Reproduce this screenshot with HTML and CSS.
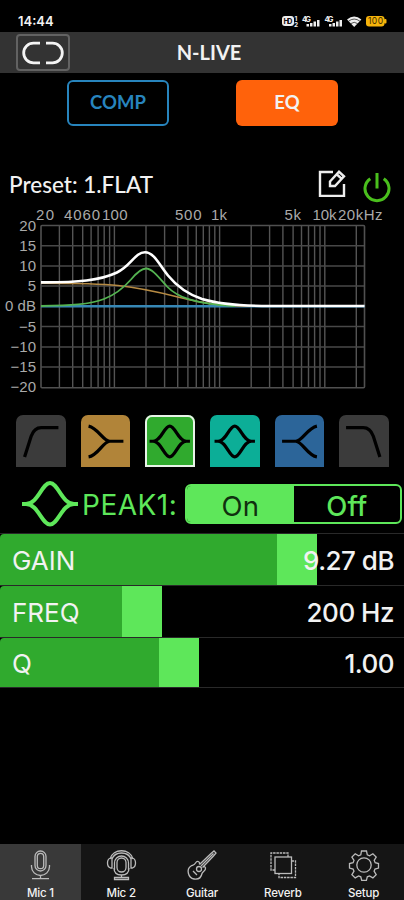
FILE: index.html
```html
<!DOCTYPE html>
<html lang="en">
<head>
  <meta charset="UTF-8">
  <meta name="viewport" content="width=device-width, initial-scale=1.0">
  <title>N-LIVE</title>
  <link rel="stylesheet" href="styles.css">
</head>
<body>
  <div class="statusbar">
    <span class="clock">14:44</span>
    <svg class="status-icons" width="108" height="16" viewBox="0 0 108 16">
      <rect x="1" y="3" width="12" height="10" rx="3" fill="#eee"/>
      <text x="2.5" y="11" font-size="7.5" font-weight="700" fill="#111" textLength="9">HD</text>
      <text x="13.5" y="7.5" font-size="6.5" font-weight="700">1</text>
      <text x="13" y="14" font-size="6.5" font-weight="700">2</text>
      <text x="21" y="8.5" font-size="7.5" font-weight="700" textLength="9">4G</text>
      <path d="M25.500 13.500v-2.500h2.500v2.500zM29 13.500v-3.500h2.500v3.500zM32.500 13.500v-5h2.500v5zM36 13.500v-6.500h2.500v6.500z"/>
      <text x="43.500" y="8.500" font-size="7.500" font-weight="700" textLength="9">4G</text>
      <path d="M48 13.500v-2.500h2.500v2.500zM51.500 13.500v-3.500h2.500v3.500zM55 13.500v-5h2.500v5zM58.500 13.500v-6.500h2.500v6.500z"/>
      <path d="M66 6.500q7.200-6 14.400 0l-7.200 7.500z"/>
      <path d="M67.500 8.200q5.700-4.300 11.400 0M69.800 10.600q3.400-2.600 6.800 0" fill="none" stroke="#111" stroke-width=".7"/>
      <rect x="85" y="3" width="18.500" height="10.500" rx="3" fill="#f6b40b"/>
      <rect x="103" y="6" width="2.500" height="4.500" rx="1" fill="#f6b40b"/>
      <text x="87" y="11.300" font-size="8.500" fill="#3c2c00" textLength="15">100</text>
    </svg>
  </div>

  <header class="header">
    <button class="link-button">
      <svg width="44" height="26" viewBox="0 0 44 26">
        <path d="M19 3.200h-6.500a9.800 9.800 0 0 0 0 19.600h6.500M25 3.200h6.500a9.800 9.800 0 0 1 0 19.600h-6.500"/>
      </svg>
    </button>
    <h1>N-LIVE</h1>
  </header>

  <div class="modes">
    <button class="mode comp">COMP</button>
    <button class="mode eq">EQ</button>
  </div>

  <div class="preset">
    <span class="preset-name">Preset: 1.FLAT</span>
    <svg class="edit" width="28" height="28" viewBox="0 0 28 28">
      <path d="M15 3H2v24h24V15M12 12.500l9-9.700 5 4.600-9 9.600h-5zM19 5.500l4.500 4.200"/>
    </svg>
    <svg class="power" width="28" height="32" viewBox="0 0 28 32">
      <path d="M7.300 7.700a12 12 0 1 0 13.400 0M14 2v15.500"/>
    </svg>
  </div>

  <svg class="graph" width="404" height="194" viewBox="0 205 404 194">
    <path class="vline" d="M59.400 225v163M72.700 225v163M82.700 225v163M91.100 225v163M98.100 225v163M104.200 225v163M109.600 225v163M114.400 225v163M146 225v163M164.600 225v163M177.700 225v163M187.900 225v163M196.300 225v163M203.300 225v163M209.400 225v163M214.800 225v163M219.600 225v163M251.200 225v163M269.600 225v163M282.900 225v163M293.100 225v163M301.500 225v163M308.500 225v163M314.600 225v163M320 225v163M324.800 225v163M356.300 225v163"/>
    <path class="hline" d="M41 245.700h324M41 266h324M41 286h324M41 326.500h324M41 347h324M41 367h324"/>
    <rect class="frame" x="41" y="225.500" width="323.500" height="162.200" rx="1"/>
    <path class="zero" d="M41 306.200H364.500"/>
    <path class="low" d="M41 283.200C74 283.200 100 283.600 118 285.500C145 288.500 162 293 180 297.500C200 302.500 218 306 251 306"/>
    <path class="peak" d="M41 306C70 305.500 90 304.500 104 299C117 294 124 287.500 131 279.500C136 273.500 141 268.500 146 268.500C152 268.500 158 276.500 167 286.500C177 297 194 304 235 306"/>
    <path class="sum" d="M41 282.400C78 282.600 100 280.500 117 272.500C131 266 135 252.300 145 252.300C154 252.300 159 264.500 168 275.500C177 286.500 187 294 202 299C219 304 240 306 270 306H364.500"/>
    <g class="freq-labels">
      <text x="36" y="220" textLength="18">20</text>
      <text x="64" y="220" textLength="17.500">40</text>
      <text x="82.500" y="220" textLength="17.500">60</text>
      <text x="102" y="220" textLength="25.500">100</text>
      <text x="175" y="220" textLength="26.500">500</text>
      <text x="211" y="220" textLength="16">1k</text>
      <text x="284.500" y="220" textLength="16.500">5k</text>
      <text x="312.500" y="220" textLength="24">10k</text>
      <text x="338" y="220" textLength="44.500">20kHz</text>
    </g>
    <g class="db-labels">
      <text x="36" y="230.500">20</text>
      <text x="36" y="250.500">15</text>
      <text x="36" y="270.800">10</text>
      <text x="36" y="291">5</text>
      <text x="36" y="311.300" textLength="31">0 dB</text>
      <text x="36" y="331.500">−5</text>
      <text x="36" y="351.800">−10</text>
      <text x="36" y="372">−15</text>
      <text x="36" y="392.300">−20</text>
    </g>
  </svg>

  <div class="filters">
    <button class="filter"><svg viewBox="0 0 49 52"><path d="M8.500 41.500 15 21Q18 12.500 25 12.500H42"/></svg></button>
    <button class="filter shelf-low"><svg viewBox="0 0 49 52"><path d="M7.500 11C17 13 22 26 28.500 26H42M7.500 41.500C17 40 22 26 28.500 26"/></svg></button>
    <button class="filter peak1 selected"><svg viewBox="0 0 49 52"><path d="M4.500 26H8C16 26 19 11 24.500 11S33 26 41 26H44.500M8 26C16 26 19 41.500 24.500 41.500S33 26 41 26"/></svg></button>
    <button class="filter peak2"><svg viewBox="0 0 49 52"><path d="M4.500 26H8C16 26 19 11 24.500 11S33 26 41 26H44.500M8 26C16 26 19 41.500 24.500 41.500S33 26 41 26"/></svg></button>
    <button class="filter shelf-high"><svg viewBox="0 0 49 52"><path d="M41.500 11C32 13 27 26 20.500 26H7M41.500 41.500C32 40 27 26 20.500 26"/></svg></button>
    <button class="filter"><svg viewBox="0 0 49 52"><path d="M7 12.500H24Q31 12.500 34 21L40.500 41.500"/></svg></button>
  </div>

  <div class="band">
    <svg class="band-icon" width="58" height="48" viewBox="0 0 58 48">
      <path d="M1 24H5C17 24 21 3 29 3S41 24 53 24H57M5 24C17 24 21 44.500 29 44.500S41 24 53 24"/>
    </svg>
    <span class="band-name">PEAK1:</span>
    <div class="toggle">
      <button class="on">On</button>
      <button class="off">Off</button>
    </div>
  </div>

  <div class="sliders">
    <div class="slider">
      <div class="fill" style="width: 316.5px"></div>
      <span>GAIN</span><span>9.27 dB</span>
    </div>
    <div class="slider">
      <div class="fill" style="width: 162px"></div>
      <span>FREQ</span><span>200 Hz</span>
    </div>
    <div class="slider">
      <div class="fill" style="width: 199px"></div>
      <span>Q</span><span>1.00</span>
    </div>
  </div>

  <nav class="tabs">
    <a class="tab active">
      <svg viewBox="0 0 32 32"><rect x="11" y="2" width="11" height="20" rx="5.500"/><rect x="13.300" y="4.300" width="6.400" height="15.400" rx="3.200"/><path d="M7.500 16v1.500a9 9 0 0 0 18 0V16M16.500 26.500v3M8 29.700h17"/></svg>
      <span>Mic 1</span>
    </a>
    <a class="tab">
      <svg viewBox="0 0 32 32"><path d="M5 10C8-1 25-1 28 10M7 10C10 2 23 2 26 10M7 9v10H5.500Q2.500 18 2.500 14T5.500 9zM26 9v10h1.500Q30.500 18 30.500 14T27.500 9zM9.500 21V14a7 7 0 0 1 14 0v7M9 19q0 7 7.500 7t7.500-7M16.500 26v3M9.500 28.500h14v2h-14z"/><rect x="12" y="9" width="9" height="14" rx="4.500"/></svg>
      <span>Mic 2</span>
    </a>
    <a class="tab">
      <svg viewBox="0 0 32 32"><path d="M13.500 15.500 25 4.500 28 2l2 2-2.500 3L16.500 18.500M15 17 27.500 4.500M13.500 15.500C14 12 11 11.500 9.500 14C8.500 16 7 16 5 17C0 20 2 29 8 30C14 31 15.500 27 16 24.500C16.500 22.500 20 22 19.500 19C19 17 17.500 17.500 16.500 18.500M7 22l4 4"/><circle cx="13" cy="20" r="2.500"/></svg>
      <span>Guitar</span>
    </a>
    <a class="tab">
      <svg viewBox="0 0 32 32"><rect x="8" y="8" width="16.500" height="16.500"/><path stroke-dasharray="2.500 .8" d="M8 21H4V4H21V8M24.500 12H28.500V28.500H12V24.500"/></svg>
      <span>Reverb</span>
    </a>
    <a class="tab">
      <svg viewBox="0 0 32 32"><circle cx="16" cy="16" r="7.200"/><path d="M13.500 2h5l.8 3.800 2.200 1 3.400-2.100 3.300 3.300-2 3.400 1 2.300 3.300.8v4.600l-3.500.9-.9 2.200 2.100 3.400-3.300 3.300-3.400-2-2.200.9-.9 3.500h-4.700l-.9-3.500-2.200-.9-3.400 2-3.300-3.300 2.100-3.400-.9-2.200-3.600-.9v-4.600l3.600-.8.9-2.300-2.100-3.400 3.300-3.300 3.400 2.100 2.200-1z"/></svg>
      <span>Setup</span>
    </a>
  </nav>
</body>
</html>
```
FILE: styles.css
```css
* {
  box-sizing: border-box;
}

body {
  margin: 0;
  background: #000;
  color: #f2f2f2;
  font-family: Inter, Roboto, sans-serif;
  width: 404px;
  height: 900px;
  display: flex;
  flex-direction: column;
  overflow: hidden;
}

button {
  margin: 0;
  padding: 0;
  border: none;
  background: none;
  color: inherit;
  font-family: inherit;
}

svg {
  display: block;
  flex: none;
}

.statusbar {
  height: 32px;
  padding: 9px 15px 0 18px;
  display: flex;
  justify-content: space-between;
}

.clock {
  font-size: 13px;
  line-height: 24px;
  font-weight: 600;
}

.status-icons {
  margin-top: 4px;
  fill: #eee;
}

.header {
  height: 41px;
  padding: 0 16px;
  background: #333;
  display: grid;
  grid-template-columns: 54px 1fr 40px;
  align-items: center;
}

.link-button {
  height: 37px;
  border: 2px solid #626262;
  border-radius: 4px;
  display: flex;
  align-items: center;
  justify-content: center;
}

.link-button path {
  fill: none;
  stroke: #f4f4f4;
  stroke-width: 2.8;
}

.header h1 {
  margin: -2px 0 0;
  text-align: center;
  font-family: Lato, sans-serif;
  font-size: 20px;
  font-weight: 700;
}

.modes {
  padding: 7px 66px 0 67px;
  display: flex;
  justify-content: space-between;
}

.mode {
  width: 102px;
  height: 46px;
  padding-bottom: 2px;
  border-radius: 6px;
  font-family: Lato, sans-serif;
  font-size: 18.5px;
  font-weight: 700;
}

.comp {
  border: 2px solid #2784bd;
  color: #2784bd;
}

.eq {
  background: #ff620b;
}

.preset {
  height: 79px;
  padding: 43px 13px 0 9px;
  display: flex;
}

.preset-name {
  flex: 1;
  font-family: Lato, sans-serif;
  font-size: 22.5px;
  line-height: 32px;
  font-weight: 500;
}

.edit {
  margin-right: 17px;
  margin-top: 0;
  fill: none;
  stroke: #eee;
  stroke-width: 2.4;
}

.power {
  margin-top: 2px;
  fill: none;
  stroke: #4abf1d;
  stroke-width: 3;
}

.graph path,
.graph rect {
  fill: none;
}

.graph .vline {
  stroke: #545454;
  stroke-width: 1.4;
}

.graph .hline {
  stroke: #484848;
  stroke-width: 1.5;
}

.graph .frame {
  stroke: #505050;
  stroke-width: 1.6;
}

.graph .zero {
  stroke: #3787b5;
  stroke-width: 2.5;
}

.graph .low {
  stroke: #b78b43;
  stroke-width: 1.6;
}

.graph .peak {
  stroke: #54b351;
  stroke-width: 1.8;
}

.graph .sum {
  stroke: #fff;
  stroke-width: 2.6;
}

.graph text {
  font-family: "Liberation Sans", sans-serif;
  font-size: 15px;
  fill: #aaa;
}

.db-labels {
  text-anchor: end;
}

.filters {
  padding: 16px 15px 0 16px;
  display: flex;
  justify-content: space-between;
}

.filter {
  width: 49.5px;
  height: 52px;
  border-radius: 7px 7px 0 0;
  background: #3b3b3b;
}

.filter path {
  fill: none;
  stroke: #000;
  stroke-width: 3.2;
}

.shelf-low {
  background: #b18439;
}

.peak1 {
  background: #30aa2e;
}

.peak2 {
  background: #0cae97;
}

.shelf-high {
  background: #2c6599;
}

.selected {
  box-shadow: inset 0 0 0 2px #e8f3e8;
}

.band {
  height: 66px;
  padding: 17px 2px 9px 21px;
  display: flex;
  align-items: center;
}

.band-icon path {
  fill: none;
  stroke: #5ee75a;
  stroke-width: 4;
}

.band-name {
  width: 103px;
  margin-left: 3px;
  padding-top: 2px;
  color: #5ee75a;
  font-size: 28px;
  letter-spacing: .5px;
}

.toggle {
  flex: 1;
  height: 40px;
  border: 2px solid #5ee75a;
  border-radius: 6px;
  display: grid;
  grid-template-columns: 1fr 1fr;
  overflow: hidden;
}

.toggle button {
  padding-top: 2px;
  font-size: 27.5px;
  line-height: 36px;
}

.on {
  background: #5ee75a;
  color: #10300f;
}

.toggle .off {
  color: #5ee75a;
  font-weight: 500;
}

.slider {
  position: relative;
  height: 51.8px;
  padding: 2px 10px 0 12px;
  border-top: 1px solid #292929;
  display: flex;
  justify-content: space-between;
  align-items: center;
  font-size: 26px;
}

.slider:last-child {
  border-bottom: 1px solid #292929;
}

.slider span {
  position: relative;
}

.slider span:last-child {
  font-weight: 500;
  letter-spacing: -.5px;
}

.fill {
  position: absolute;
  left: 0;
  top: 0;
  bottom: 0;
  background: #30aa2e;
  border-right: 40.5px solid #5ee75a;
  border-radius: 4px 0 0 0;
}

.tabs {
  height: 56px;
  margin-top: auto;
  display: grid;
  grid-template-columns: repeat(5, 1fr);
  background: #151515;
}

.tab {
  padding-top: 5px;
  display: flex;
  flex-direction: column;
  align-items: center;
  font-size: 11.5px;
  line-height: 15px;
  font-weight: 500;
  letter-spacing: -.2px;
}

.tab.active {
  background: #393939;
}

.tab svg {
  width: 32px;
  height: 32px;
  margin-bottom: 5px;
  fill: none;
  stroke: #bbb;
  stroke-width: 1.3;
}
```
